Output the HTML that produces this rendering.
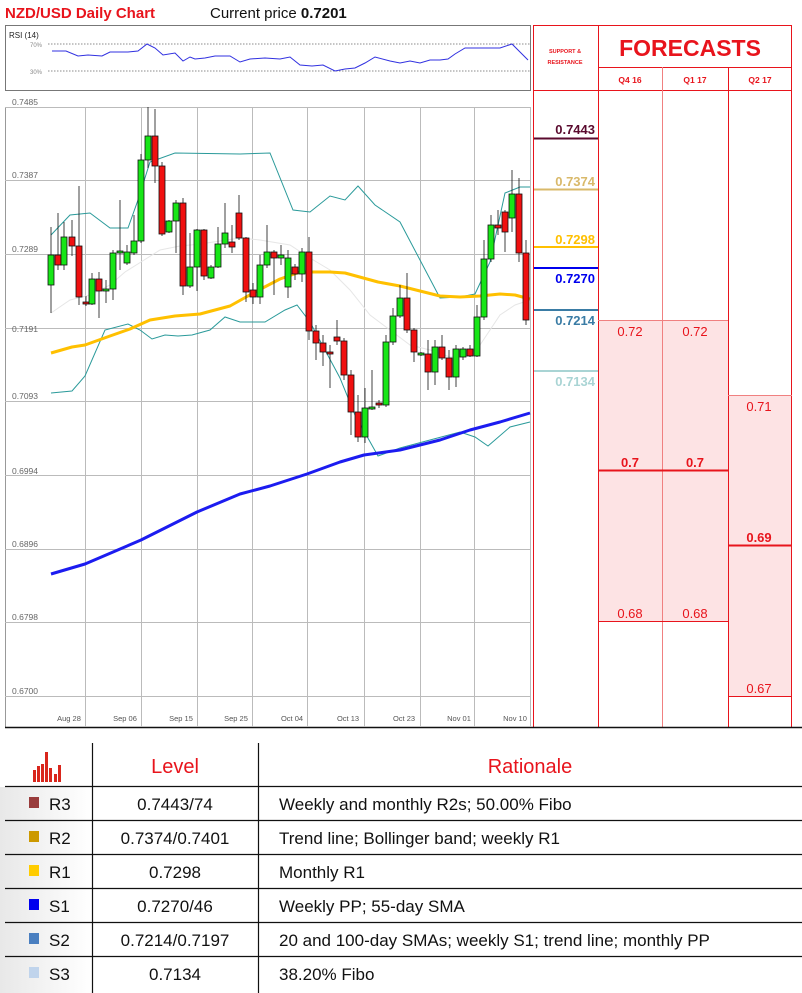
<!DOCTYPE html>
<html><head><meta charset="utf-8"><style>
html,body{margin:0;padding:0;background:#fff;width:802px;height:993px;overflow:hidden;font-family:"Liberation Sans Narrow","Liberation Sans",sans-serif}
svg{position:absolute;left:0;top:0}
</style></head><body>
<svg width="802" height="993" viewBox="0 0 802 993" xmlns="http://www.w3.org/2000/svg" font-family="Liberation Sans Narrow, Liberation Sans, sans-serif">
<text x="5" y="18" font-size="15" font-weight="bold" fill="#e8141c">NZD/USD Daily Chart</text>
<text x="210" y="18" font-size="15" fill="#111">Current price <tspan font-weight="bold">0.7201</tspan></text>
<rect x="5.5" y="25.5" width="525" height="65" fill="#fff" stroke="#777"/>
<text x="9" y="38" font-size="8" fill="#222">RSI (14)</text>
<text x="30" y="47" font-size="6" fill="#888">70%</text>
<text x="30" y="74" font-size="6" fill="#888">30%</text>
<line x1="48" y1="44" x2="530" y2="44" stroke="#666" stroke-dasharray="1.5,1.5" stroke-width="0.7"/>
<line x1="48" y1="71" x2="530" y2="71" stroke="#666" stroke-dasharray="1.5,1.5" stroke-width="0.7"/>
<polyline fill="none" stroke="#3030e0" stroke-width="1" points="52,51 66,51 78,56 88,55 102,56 110,52 128,52 138,51 147,44 155,48 163,55 175,53 183,61 190,57 195,59 205,58 215,56 230,56 240,62 250,59 265,58 280,59 290,57 300,65 312,66 323,65 335,71 345,69 355,68 365,63 375,57 390,61 400,63 410,61 420,63 430,60 440,60 448,59 455,54 465,48 480,48 500,48 512,44 520,52 528,60"/>
<rect x="533.5" y="25.5" width="258" height="702" fill="none" stroke="#e8141c"/>
<line x1="598.5" y1="25" x2="598.5" y2="727" stroke="#e8141c"/>
<line x1="598" y1="67.5" x2="792" y2="67.5" stroke="#e8141c"/>
<line x1="533" y1="90.5" x2="792" y2="90.5" stroke="#e8141c"/>
<line x1="662.5" y1="67" x2="662.5" y2="727" stroke="#f08080"/>
<line x1="728.5" y1="67" x2="728.5" y2="727" stroke="#e8141c"/>
<text x="565" y="53" font-size="5.5" font-weight="bold" fill="#e8141c" text-anchor="middle">SUPPORT &amp;</text>
<text x="565" y="64" font-size="5.5" font-weight="bold" fill="#e8141c" text-anchor="middle">RESISTANCE</text>
<text x="690" y="56" font-size="23" font-weight="bold" fill="#e8141c" text-anchor="middle">FORECASTS</text>
<text x="630" y="83" font-size="8.5" font-weight="bold" fill="#e8141c" text-anchor="middle">Q4 16</text>
<text x="695" y="83" font-size="8.5" font-weight="bold" fill="#e8141c" text-anchor="middle">Q1 17</text>
<text x="760" y="83" font-size="8.5" font-weight="bold" fill="#e8141c" text-anchor="middle">Q2 17</text>
<rect x="599" y="320" width="129" height="301" fill="#fde3e4"/>
<rect x="729" y="395" width="62" height="301" fill="#fde3e4"/>
<line x1="662.5" y1="320" x2="662.5" y2="621" stroke="#f08080"/>
<line x1="598" y1="320.5" x2="728" y2="320.5" stroke="#f08080"/>
<line x1="598" y1="470.5" x2="728" y2="470.5" stroke="#e8141c" stroke-width="2"/>
<line x1="598" y1="621.5" x2="728" y2="621.5" stroke="#e8141c"/>
<line x1="728" y1="395.5" x2="792" y2="395.5" stroke="#f08080"/>
<line x1="728" y1="545.5" x2="792" y2="545.5" stroke="#e8141c" stroke-width="2"/>
<line x1="728" y1="696.5" x2="792" y2="696.5" stroke="#e8141c"/>
<g font-size="13" fill="#e8141c" text-anchor="middle" font-family="Liberation Sans, sans-serif">
<text x="630" y="336">0.72</text><text x="695" y="336">0.72</text>
<text x="630" y="467" font-weight="bold">0.7</text><text x="695" y="467" font-weight="bold">0.7</text>
<text x="630" y="618">0.68</text><text x="695" y="618">0.68</text>
<text x="759" y="411">0.71</text>
<text x="759" y="542" font-weight="bold">0.69</text>
<text x="759" y="693">0.67</text>
</g>
<g font-size="13" font-weight="bold" text-anchor="end" font-family="Liberation Sans, sans-serif">
<line x1="534" y1="138.5" x2="598" y2="138.5" stroke="#5a0a2e" stroke-width="2"/>
<text x="595" y="134" fill="#5a0a2e">0.7443</text>
<line x1="534" y1="189.5" x2="598" y2="189.5" stroke="#d9b96a" stroke-width="2"/>
<text x="595" y="186" fill="#d9b96a">0.7374</text>
<line x1="534" y1="247" x2="598" y2="247" stroke="#ffc000" stroke-width="2"/>
<text x="595" y="244" fill="#ffc000">0.7298</text>
<line x1="534" y1="268" x2="598" y2="268" stroke="#0000ee" stroke-width="2"/>
<text x="595" y="283" fill="#0000ee">0.7270</text>
<line x1="534" y1="310" x2="598" y2="310" stroke="#3a7ca5" stroke-width="2"/>
<text x="595" y="325" fill="#3a7ca5">0.7214</text>
<line x1="534" y1="371" x2="598" y2="371" stroke="#a9d4d4" stroke-width="2"/>
<text x="595" y="386" fill="#a9d4d4">0.7134</text>
</g>
<line x1="5.5" y1="107" x2="5.5" y2="727" stroke="#999"/>
<line x1="5" y1="727.5" x2="802" y2="727.5" stroke="#111" stroke-width="1.5"/>
<g stroke="#bbb" stroke-width="1">
<line x1="5" y1="107.5" x2="530" y2="107.5"/>
<line x1="5" y1="180.5" x2="530" y2="180.5"/>
<line x1="5" y1="254.5" x2="530" y2="254.5"/>
<line x1="5" y1="328.5" x2="530" y2="328.5"/>
<line x1="5" y1="401.5" x2="530" y2="401.5"/>
<line x1="5" y1="475.5" x2="530" y2="475.5"/>
<line x1="5" y1="549.5" x2="530" y2="549.5"/>
<line x1="5" y1="622.5" x2="530" y2="622.5"/>
<line x1="5" y1="696.5" x2="530" y2="696.5"/>
<line x1="85.5" y1="107" x2="85.5" y2="727"/>
<line x1="141.5" y1="107" x2="141.5" y2="727"/>
<line x1="197.5" y1="107" x2="197.5" y2="727"/>
<line x1="252.5" y1="107" x2="252.5" y2="727"/>
<line x1="307.5" y1="107" x2="307.5" y2="727"/>
<line x1="364.5" y1="107" x2="364.5" y2="727"/>
<line x1="420.5" y1="107" x2="420.5" y2="727"/>
<line x1="474.5" y1="107" x2="474.5" y2="727"/>
<line x1="530.5" y1="107" x2="530.5" y2="727"/>
</g>
<g font-size="8.5" fill="#666">
<text x="12" y="105">0.7485</text><text x="12" y="178">0.7387</text><text x="12" y="252">0.7289</text>
<text x="12" y="332">0.7191</text><text x="12" y="399">0.7093</text><text x="12" y="474">0.6994</text>
<text x="12" y="547">0.6896</text><text x="12" y="620">0.6798</text><text x="12" y="694">0.6700</text>
</g>
<g font-size="7.5" fill="#555" text-anchor="middle">
<text x="69" y="721">Aug 28</text><text x="125" y="721">Sep 06</text><text x="181" y="721">Sep 15</text>
<text x="236" y="721">Sep 25</text><text x="292" y="721">Oct 04</text><text x="348" y="721">Oct 13</text>
<text x="404" y="721">Oct 23</text><text x="459" y="721">Nov 01</text><text x="515" y="721">Nov 10</text>
</g>
<polyline fill="none" stroke="#e6e6e6" stroke-width="1" points="51,313 70,300 90,295 110,285 125,272 141,262 160,250 180,246 200,244 240,238 260,240 290,245 310,258 330,270 350,290 370,315 390,330 410,345 430,350 450,357 465,357 480,345 500,315 515,305 530,300"/>
<polyline fill="none" stroke="#2a9a9a" stroke-width="1" points="51,235 70,215 90,213 110,228 128,228 138,200 150,162 175,153 240,154 270,153 293,210 310,212 330,196 345,200 358,186 375,205 400,222 420,260 440,298 460,297 475,294 490,262 505,193 520,187 530,187"/>
<polyline fill="none" stroke="#2a9a9a" stroke-width="1" points="51,393 72,391 85,376 105,330 128,324 140,330 152,339 165,335 178,336 192,335 210,330 225,317 240,322 265,322 285,310 297,305 310,322 325,350 340,378 355,415 378,456 400,448 430,440 460,432 475,437 488,446 510,427 530,422"/>
<polyline fill="none" stroke="#ffc000" stroke-width="3" stroke-linejoin="round" points="51,353 72,347 85,345 110,336 130,329 150,320 175,316 200,314 230,306 255,292 280,279 300,272 330,272 345,273 378,282 400,286 420,291 440,296 460,297 480,296 500,294 515,295 530,299"/>
<polyline fill="none" stroke="#1c1cf0" stroke-width="3" stroke-linejoin="round" points="51,574 85,564 141,540 197,512 240,494 270,486 307,474 340,462 364,455 400,450 440,440 470,430 500,422 530,413"/>
<g stroke="#111" stroke-width="0.8">
<line x1="51" y1="227" x2="51" y2="313"/><rect x="48" y="255" width="6" height="30" fill="#17e617"/>
<line x1="58" y1="213" x2="58" y2="270"/><rect x="55" y="255" width="6" height="10" fill="#f01010"/>
<line x1="64" y1="222" x2="64" y2="270"/><rect x="61" y="237" width="6" height="28" fill="#17e617"/>
<line x1="72" y1="220" x2="72" y2="256"/><rect x="69" y="237" width="6" height="9" fill="#f01010"/>
<line x1="79" y1="186" x2="79" y2="305"/><rect x="76" y="246" width="6" height="51" fill="#f01010"/>
<line x1="86" y1="296" x2="86" y2="306"/><rect x="83" y="302" width="6" height="2" fill="#f01010"/>
<line x1="92" y1="273" x2="92" y2="305"/><rect x="89" y="279" width="6" height="25" fill="#17e617"/>
<line x1="99" y1="272" x2="99" y2="318"/><rect x="96" y="279" width="6" height="12" fill="#f01010"/>
<line x1="106" y1="280" x2="106" y2="303"/><rect x="103" y="289" width="6" height="2" fill="#17e617"/>
<line x1="113" y1="250" x2="113" y2="300"/><rect x="110" y="253" width="6" height="36" fill="#17e617"/>
<line x1="120" y1="200" x2="120" y2="270"/><rect x="117" y="251" width="6" height="2" fill="#17e617"/>
<line x1="127" y1="245" x2="127" y2="265"/><rect x="124" y="252" width="6" height="11" fill="#17e617"/>
<line x1="134" y1="215" x2="134" y2="255"/><rect x="131" y="241" width="6" height="12" fill="#17e617"/>
<line x1="141" y1="154" x2="141" y2="243"/><rect x="138" y="160" width="6" height="81" fill="#17e617"/>
<line x1="148" y1="107" x2="148" y2="168"/><rect x="145" y="136" width="6" height="24" fill="#17e617"/>
<line x1="155" y1="109" x2="155" y2="183"/><rect x="152" y="136" width="6" height="30" fill="#f01010"/>
<line x1="162" y1="162" x2="162" y2="236"/><rect x="159" y="166" width="6" height="68" fill="#f01010"/>
<line x1="169" y1="220" x2="169" y2="233"/><rect x="166" y="221" width="6" height="11" fill="#17e617"/>
<line x1="176" y1="200" x2="176" y2="253"/><rect x="173" y="203" width="6" height="18" fill="#17e617"/>
<line x1="183" y1="198" x2="183" y2="295"/><rect x="180" y="203" width="6" height="83" fill="#f01010"/>
<line x1="190" y1="233" x2="190" y2="288"/><rect x="187" y="267" width="6" height="19" fill="#17e617"/>
<line x1="197" y1="229" x2="197" y2="291"/><rect x="194" y="230" width="6" height="37" fill="#17e617"/>
<line x1="204" y1="229" x2="204" y2="280"/><rect x="201" y="230" width="6" height="46" fill="#f01010"/>
<line x1="211" y1="265" x2="211" y2="279"/><rect x="208" y="267" width="6" height="11" fill="#17e617"/>
<line x1="218" y1="227" x2="218" y2="268"/><rect x="215" y="244" width="6" height="23" fill="#17e617"/>
<line x1="225" y1="203" x2="225" y2="248"/><rect x="222" y="233" width="6" height="11" fill="#17e617"/>
<line x1="232" y1="225" x2="232" y2="253"/><rect x="229" y="242" width="6" height="5" fill="#f01010"/>
<line x1="239" y1="195" x2="239" y2="240"/><rect x="236" y="213" width="6" height="25" fill="#f01010"/>
<line x1="246" y1="237" x2="246" y2="302"/><rect x="243" y="238" width="6" height="54" fill="#f01010"/>
<line x1="253" y1="283" x2="253" y2="304"/><rect x="250" y="290" width="6" height="7" fill="#f01010"/>
<line x1="260" y1="255" x2="260" y2="304"/><rect x="257" y="265" width="6" height="32" fill="#17e617"/>
<line x1="267" y1="225" x2="267" y2="268"/><rect x="264" y="252" width="6" height="13" fill="#17e617"/>
<line x1="274" y1="250" x2="274" y2="295"/><rect x="271" y="252" width="6" height="6" fill="#f01010"/>
<line x1="281" y1="245" x2="281" y2="265"/><rect x="278" y="255" width="6" height="3" fill="#17e617"/>
<line x1="288" y1="250" x2="288" y2="298"/><rect x="285" y="258" width="6" height="29" fill="#17e617"/>
<line x1="295" y1="264" x2="295" y2="280"/><rect x="292" y="267" width="6" height="7" fill="#f01010"/>
<line x1="302" y1="248" x2="302" y2="282"/><rect x="299" y="252" width="6" height="22" fill="#17e617"/>
<line x1="309" y1="237" x2="309" y2="340"/><rect x="306" y="252" width="6" height="79" fill="#f01010"/>
<line x1="316" y1="325" x2="316" y2="360"/><rect x="313" y="331" width="6" height="12" fill="#f01010"/>
<line x1="323" y1="335" x2="323" y2="366"/><rect x="320" y="343" width="6" height="9" fill="#f01010"/>
<line x1="330" y1="345" x2="330" y2="388"/><rect x="327" y="352" width="6" height="2" fill="#f01010"/>
<line x1="337" y1="320" x2="337" y2="345"/><rect x="334" y="337" width="6" height="4" fill="#f01010"/>
<line x1="344" y1="338" x2="344" y2="380"/><rect x="341" y="341" width="6" height="34" fill="#f01010"/>
<line x1="351" y1="370" x2="351" y2="435"/><rect x="348" y="375" width="6" height="37" fill="#f01010"/>
<line x1="358" y1="395" x2="358" y2="442"/><rect x="355" y="412" width="6" height="25" fill="#f01010"/>
<line x1="365" y1="388" x2="365" y2="443"/><rect x="362" y="408" width="6" height="29" fill="#17e617"/>
<line x1="372" y1="370" x2="372" y2="410"/><rect x="369" y="407" width="6" height="2" fill="#17e617"/>
<line x1="379" y1="400" x2="379" y2="408"/><rect x="376" y="403" width="6" height="2" fill="#f01010"/>
<line x1="386" y1="335" x2="386" y2="407"/><rect x="383" y="342" width="6" height="63" fill="#17e617"/>
<line x1="393" y1="308" x2="393" y2="345"/><rect x="390" y="316" width="6" height="26" fill="#17e617"/>
<line x1="400" y1="285" x2="400" y2="318"/><rect x="397" y="298" width="6" height="18" fill="#17e617"/>
<line x1="407" y1="273" x2="407" y2="333"/><rect x="404" y="298" width="6" height="32" fill="#f01010"/>
<line x1="414" y1="328" x2="414" y2="362"/><rect x="411" y="330" width="6" height="22" fill="#f01010"/>
<line x1="421" y1="352" x2="421" y2="356"/><rect x="418" y="353" width="6" height="2" fill="#17e617"/>
<line x1="428" y1="340" x2="428" y2="390"/><rect x="425" y="354" width="6" height="18" fill="#f01010"/>
<line x1="435" y1="340" x2="435" y2="385"/><rect x="432" y="347" width="6" height="25" fill="#17e617"/>
<line x1="442" y1="335" x2="442" y2="360"/><rect x="439" y="347" width="6" height="11" fill="#f01010"/>
<line x1="449" y1="350" x2="449" y2="390"/><rect x="446" y="358" width="6" height="19" fill="#f01010"/>
<line x1="456" y1="345" x2="456" y2="387"/><rect x="453" y="349" width="6" height="28" fill="#17e617"/>
<line x1="463" y1="347" x2="463" y2="360"/><rect x="460" y="349" width="6" height="8" fill="#17e617"/>
<line x1="470" y1="345" x2="470" y2="357"/><rect x="467" y="349" width="6" height="7" fill="#f01010"/>
<line x1="477" y1="305" x2="477" y2="357"/><rect x="474" y="317" width="6" height="39" fill="#17e617"/>
<line x1="484" y1="240" x2="484" y2="320"/><rect x="481" y="259" width="6" height="58" fill="#17e617"/>
<line x1="491" y1="215" x2="491" y2="262"/><rect x="488" y="225" width="6" height="34" fill="#17e617"/>
<line x1="498" y1="210" x2="498" y2="235"/><rect x="495" y="225" width="6" height="3" fill="#f01010"/>
<line x1="505" y1="210" x2="505" y2="252"/><rect x="502" y="212" width="6" height="20" fill="#f01010"/>
<line x1="512" y1="170" x2="512" y2="232"/><rect x="509" y="194" width="6" height="24" fill="#17e617"/>
<line x1="519" y1="178" x2="519" y2="262"/><rect x="516" y="194" width="6" height="59" fill="#f01010"/>
<line x1="526" y1="240" x2="526" y2="325"/><rect x="523" y="253" width="6" height="67" fill="#f01010"/>
</g>
<defs><linearGradient id="g" x1="0" x2="1"><stop offset="0" stop-color="#e8e8e8"/><stop offset="1" stop-color="#fff"/></linearGradient></defs>
<rect x="0" y="787" width="92" height="206" fill="url(#g)"/>
<g stroke="#111" stroke-width="1.2">
<line x1="92.5" y1="743" x2="92.5" y2="993"/>
<line x1="258.5" y1="743" x2="258.5" y2="993"/>
<line x1="5" y1="786.5" x2="802" y2="786.5"/>
<line x1="5" y1="820.5" x2="802" y2="820.5"/>
<line x1="5" y1="854.5" x2="802" y2="854.5"/>
<line x1="5" y1="888.5" x2="802" y2="888.5"/>
<line x1="5" y1="922.5" x2="802" y2="922.5"/>
<line x1="5" y1="956.5" x2="802" y2="956.5"/>
</g>
<g fill="#d9261c">
<rect x="33" y="770" width="3" height="12"/><rect x="37" y="766" width="3" height="16"/><rect x="41" y="764" width="3" height="18"/>
<rect x="45" y="752" width="3" height="30"/><rect x="49" y="768" width="3" height="14"/><rect x="54" y="774" width="3" height="8"/>
<rect x="58" y="765" width="3" height="17"/>
</g>
<text x="175" y="773" font-size="20" fill="#e8141c" text-anchor="middle">Level</text>
<text x="530" y="773" font-size="20" fill="#e8141c" text-anchor="middle">Rationale</text>
<g font-size="17" fill="#111">
<rect x="29" y="797" width="10" height="11" fill="#993c3c"/><text x="49" y="810">R3</text>
<text x="175" y="810" text-anchor="middle">0.7443/74</text><text x="279" y="810">Weekly and monthly R2s; 50.00% Fibo</text>
<rect x="29" y="831" width="10" height="11" fill="#cc9900"/><text x="49" y="844">R2</text>
<text x="175" y="844" text-anchor="middle">0.7374/0.7401</text><text x="279" y="844">Trend line; Bollinger band; weekly R1</text>
<rect x="29" y="865" width="10" height="11" fill="#ffcc00"/><text x="49" y="878">R1</text>
<text x="175" y="878" text-anchor="middle">0.7298</text><text x="279" y="878">Monthly R1</text>
<rect x="29" y="899" width="10" height="11" fill="#0000ee"/><text x="49" y="912">S1</text>
<text x="175" y="912" text-anchor="middle">0.7270/46</text><text x="279" y="912">Weekly PP; 55-day SMA</text>
<rect x="29" y="933" width="10" height="11" fill="#4a7fc0"/><text x="49" y="946">S2</text>
<text x="175" y="946" text-anchor="middle">0.7214/0.7197</text><text x="279" y="946">20 and 100-day SMAs; weekly S1; trend line; monthly PP</text>
<rect x="29" y="967" width="10" height="11" fill="#c0d4ec"/><text x="49" y="980">S3</text>
<text x="175" y="980" text-anchor="middle">0.7134</text><text x="279" y="980">38.20% Fibo</text>
</g>
</svg>
</body></html>
